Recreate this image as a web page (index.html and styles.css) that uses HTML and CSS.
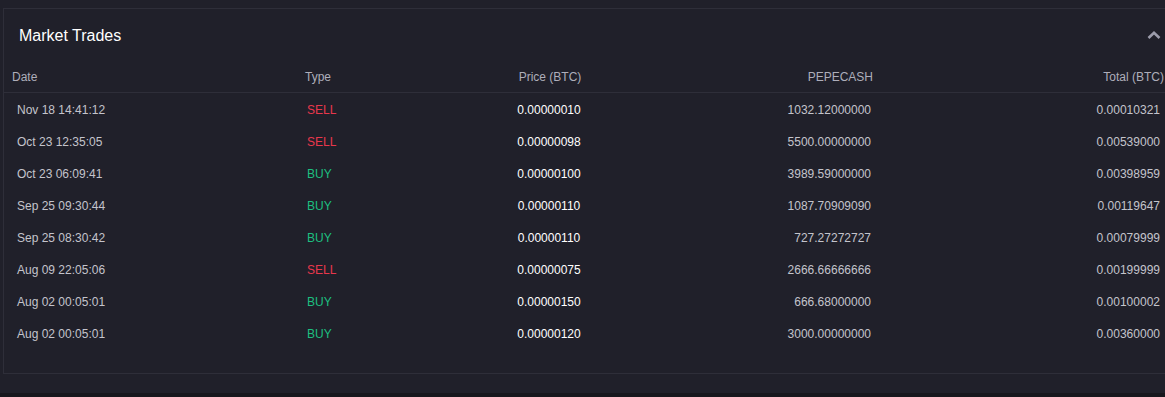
FILE: index.html
```html
<!DOCTYPE html>
<html>
<head>
<meta charset="utf-8">
<link rel="stylesheet" href="styles.css">
</head>
<body>
<div class="page">
  <section class="panel">
    <div class="panel-head">
      <h2 class="panel-title">Market Trades</h2>
      <svg class="chevron" width="14" height="8" viewBox="0 0 14 8"><path d="M1.5 7 L7 1.8 L12.5 7" fill="none" stroke="#9c9cab" stroke-width="2.6" stroke-linejoin="miter"/></svg>
    </div>
    <div class="thead">
      <div class="c-date">Date</div>
      <div class="c-type">Type</div>
      <div class="c-price">Price (BTC)</div>
      <div class="c-amt">PEPECASH</div>
      <div class="c-total">Total (BTC)</div>
    </div>
    <div class="tbody">
      <div class="trow"><div class="c-date">Nov 18 14:41:12</div><div class="c-type sell">SELL</div><div class="c-price">0.00000010</div><div class="c-amt">1032.12000000</div><div class="c-total">0.00010321</div></div>
      <div class="trow"><div class="c-date">Oct 23 12:35:05</div><div class="c-type sell">SELL</div><div class="c-price">0.00000098</div><div class="c-amt">5500.00000000</div><div class="c-total">0.00539000</div></div>
      <div class="trow"><div class="c-date">Oct 23 06:09:41</div><div class="c-type buy">BUY</div><div class="c-price">0.00000100</div><div class="c-amt">3989.59000000</div><div class="c-total">0.00398959</div></div>
      <div class="trow"><div class="c-date">Sep 25 09:30:44</div><div class="c-type buy">BUY</div><div class="c-price">0.00000110</div><div class="c-amt">1087.70909090</div><div class="c-total">0.00119647</div></div>
      <div class="trow"><div class="c-date">Sep 25 08:30:42</div><div class="c-type buy">BUY</div><div class="c-price">0.00000110</div><div class="c-amt">727.27272727</div><div class="c-total">0.00079999</div></div>
      <div class="trow"><div class="c-date">Aug 09 22:05:06</div><div class="c-type sell">SELL</div><div class="c-price">0.00000075</div><div class="c-amt">2666.66666666</div><div class="c-total">0.00199999</div></div>
      <div class="trow"><div class="c-date">Aug 02 00:05:01</div><div class="c-type buy">BUY</div><div class="c-price">0.00000150</div><div class="c-amt">666.68000000</div><div class="c-total">0.00100002</div></div>
      <div class="trow"><div class="c-date">Aug 02 00:05:01</div><div class="c-type buy">BUY</div><div class="c-price">0.00000120</div><div class="c-amt">3000.00000000</div><div class="c-total">0.00360000</div></div>
    </div>
  </section>
  <div class="footer-strip"></div>
</div>
</body>
</html>
```

FILE: styles.css
```css
* { box-sizing: border-box; }
html, body { margin: 0; padding: 0; }
body {
  background: #20202a;
  font-family: "Liberation Sans", Arial, sans-serif;
  font-size: 12px;
  color: #c4c4cc;
  overflow: hidden;
}
.page {
  width: 1165px;
  height: 397px;
  padding-top: 8px;
  display: flex;
  flex-direction: column;
}
.panel {
  margin-left: 3px;
  width: 1180px;
  height: 366px;
  border: 1px solid #2e2e39;
  border-right: none;
  background: #20202a;
}
.panel-head {
  height: 51px;
  display: flex;
  align-items: center;
  justify-content: space-between;
  padding: 2px 0 0 15px;
  width: 1157px;
}
.panel-title {
  margin: 0;
  font-size: 16px;
  font-weight: normal;
  color: #ffffff;
}
.chevron { display: block; margin-top: -2px; }
.thead, .trow {
  display: grid;
  align-items: center;
}
.thead {
  height: 33px;
  width: 1165px;
  padding-left: 8px;
  grid-template-columns: 293px 150px 190px 228px 291px;
  color: #aeaeba;
  border-bottom: 1px solid #2e2e39;
  padding-top: 1px;
}
.trow {
  height: 32px;
  padding-left: 13px;
  grid-template-columns: 290px 145px 194px 225px 289px;
}
.c-price { text-align: center; }
.c-amt, .c-total { text-align: right; }
.trow .c-price { color: #ffffff; }
.sell { color: #e8374c; }
.buy { color: #1dbf80; }
.tbody { padding-top: 1px; }
.footer-strip {
  margin-top: auto;
  height: 4px;
  background: #17171d;
}
```
